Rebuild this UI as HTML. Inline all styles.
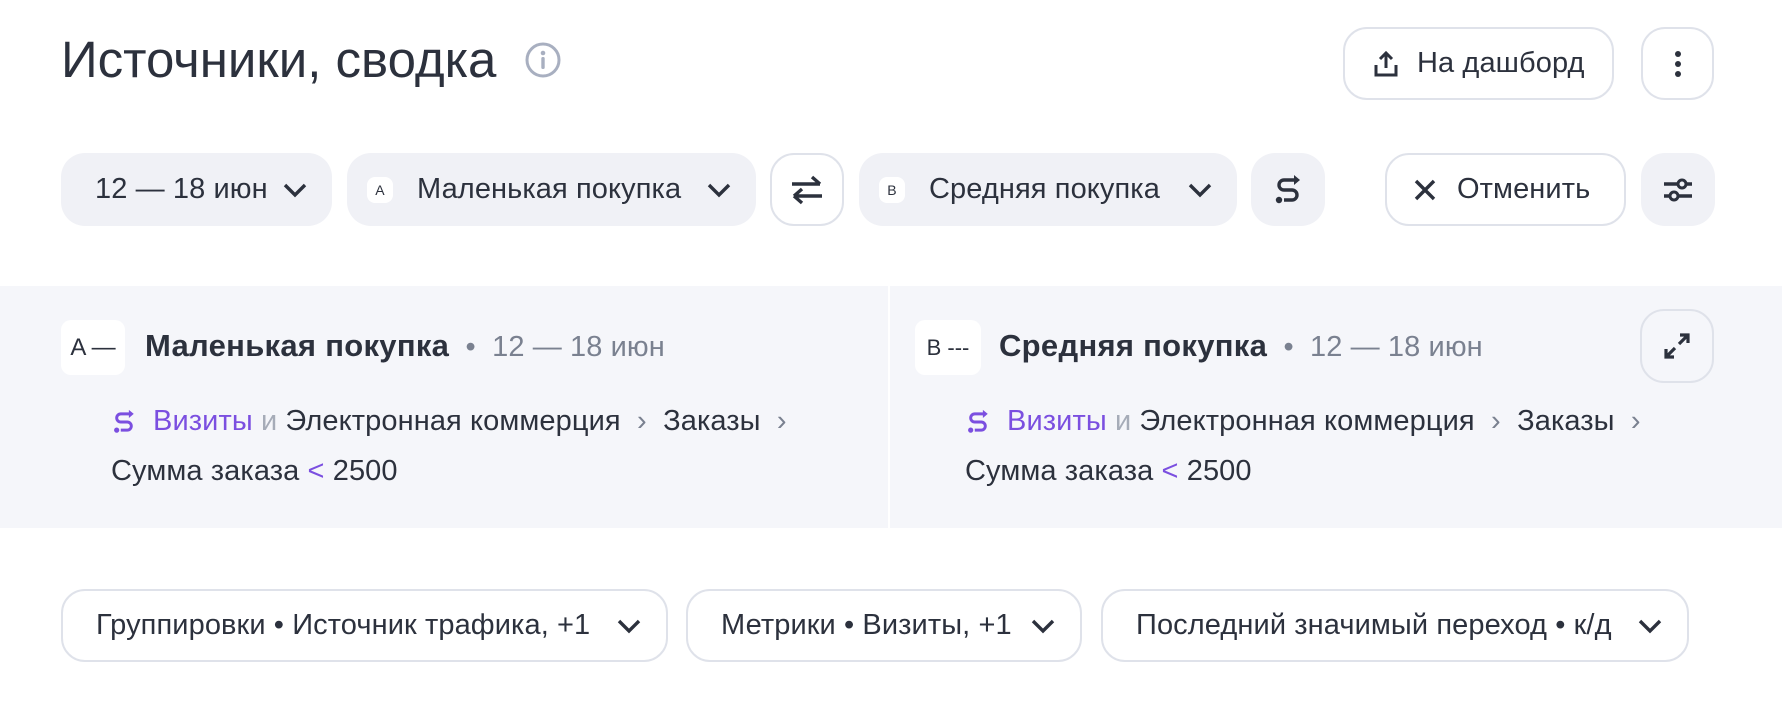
<!DOCTYPE html>
<html><head><meta charset="utf-8"><style>
*{margin:0;padding:0;box-sizing:border-box}
body{width:1782px;height:706px;background:#fff;font-family:"Liberation Sans","DejaVu Sans",sans-serif;color:#2c313d;position:relative;overflow:hidden}
.a{position:absolute}
.chip{position:absolute;height:73px;border-radius:24px;background:#f0f1f6;display:flex;align-items:center;font-size:29px;letter-spacing:0.1px;white-space:nowrap}
.sb{justify-content:space-between;padding-right:24px}
.sb>span.t{flex:1}
.wb{background:#fff;border:2px solid #dfe2ea}
.badge{display:inline-flex;width:26px;height:26px;border-radius:8px;background:#fff;font-size:14px;align-items:center;justify-content:center;margin-right:24px}
.panel{position:absolute;top:286px;height:242px;background:#f5f6fa}
.pt{position:absolute;font-size:29px;white-space:nowrap;letter-spacing:0.1px}
.bg{font-weight:bold;font-size:31px;letter-spacing:0.3px}
.gr{color:#7a8190}
.pu{color:#7b4fe0}
</style></head><body>
<div class="a" style="left:61px;top:30px;font-size:51px;letter-spacing:0px;white-space:nowrap">Источники, сводка</div>
<svg class="a" style="left:525px;top:42px" width="36" height="36" viewBox="0 0 36 36"><circle cx="18" cy="18" r="16" fill="none" stroke="#a8afc0" stroke-width="3"/><circle cx="18" cy="11" r="2.3" fill="#a8afc0"/><rect x="16.3" y="15" width="3.4" height="12" rx="1.5" fill="#a8afc0"/></svg>

<div class="chip wb" style="left:1343px;top:27px;width:271px;padding-left:26px"><svg width="30" height="30" viewBox="0 0 30 30" style="margin-right:16px"><path d="M15 4v15M9 10l6-6 6 6M5 16v10h20V16" fill="none" stroke="#2c313d" stroke-width="3"/></svg>На дашборд</div>
<div class="chip wb" style="left:1641px;top:27px;width:73px;justify-content:center"><svg width="8" height="30"><circle cx="4" cy="5" r="3" fill="#2c313d"/><circle cx="4" cy="15" r="3" fill="#2c313d"/><circle cx="4" cy="25" r="3" fill="#2c313d"/></svg></div>

<div class="chip sb" style="left:61px;top:153px;width:271px;padding-left:34px"><span class="t">12 — 18 июн</span><svg width="26" height="16" viewBox="0 0 26 16"><path d="M3 3l10 10 10-10" fill="none" stroke="#2c313d" stroke-width="3.4"/></svg></div>
<div class="chip sb" style="left:347px;top:153px;width:409px;padding-left:20px"><span class="badge">A</span><span class="t">Маленькая покупка</span><svg width="26" height="16" viewBox="0 0 26 16"><path d="M3 3l10 10 10-10" fill="none" stroke="#2c313d" stroke-width="3.4"/></svg></div>
<div class="chip wb" style="left:770px;top:153px;width:74px;justify-content:center"><svg width="34" height="30" viewBox="0 0 34 30"><path d="M2 9h28M22 2l8 7M32 21H4M12 14l-8 7M4 21l8 7" fill="none" stroke="#2c313d" stroke-width="3.4"/></svg></div>
<div class="chip sb" style="left:859px;top:153px;width:378px;padding-left:20px"><span class="badge">B</span><span class="t">Средняя покупка</span><svg width="26" height="16" viewBox="0 0 26 16"><path d="M3 3l10 10 10-10" fill="none" stroke="#2c313d" stroke-width="3.4"/></svg></div>
<div class="chip" style="left:1251px;top:153px;width:74px;justify-content:center"><svg width="30" height="32" viewBox="0 0 30 32"><path d="M24 6H11a5 5 0 0 0 0 10h8a5 5 0 0 1 0 10H11" fill="none" stroke="#2c313d" stroke-width="3.4"/><path d="M21 1l6 5-6 5z" fill="#2c313d"/><circle cx="6" cy="26" r="3.2" fill="#2c313d"/></svg></div>
<div class="chip wb" style="left:1385px;top:153px;width:241px;padding-left:26px"><svg width="24" height="24" viewBox="0 0 24 24" style="margin-right:20px"><path d="M3 3l18 18M21 3L3 21" stroke="#2c313d" stroke-width="3.4"/></svg>Отменить</div>
<div class="chip" style="left:1641px;top:153px;width:74px;justify-content:center"><svg width="32" height="32" viewBox="0 0 32 32"><path d="M2 10h14M24 10h6M2 22h6M16 22h14" stroke="#2c313d" stroke-width="3.4"/><circle cx="20" cy="10" r="4" fill="none" stroke="#2c313d" stroke-width="3"/><circle cx="12" cy="22" r="4" fill="none" stroke="#2c313d" stroke-width="3"/></svg></div>

<div class="panel" style="left:0;width:888px"></div>
<div class="panel" style="left:890px;width:892px"></div>

<div class="a" style="left:61px;top:320px;width:64px;height:55px;background:#fff;border-radius:10px;font-size:24px;display:flex;align-items:center;justify-content:center">A —</div>
<div class="pt" style="left:145px;top:328px"><span class="bg">Маленькая покупка</span> <span class="gr">&nbsp;•&nbsp; 12 — 18 июн</span></div>
<svg class="a" style="left:111px;top:409px" width="26" height="26" viewBox="0 0 30 32"><path d="M24 6H11a5 5 0 0 0 0 10h8a5 5 0 0 1 0 10H11" fill="none" stroke="#7b4fe0" stroke-width="3.6"/><path d="M21 1l6 5-6 5z" fill="#7b4fe0"/><circle cx="6" cy="26" r="3.2" fill="#7b4fe0"/></svg>
<div class="pt" style="left:153px;top:405px"><span class="pu">Визиты</span> <span class="gr" style="color:#a6acb8">и</span> Электронная коммерция <span class="gr">&nbsp;›&nbsp;</span> Заказы <span class="gr">&nbsp;›</span></div>
<div class="pt" style="left:111px;top:455px">Сумма заказа <span class="pu">&lt;</span> 2500</div>

<div class="a" style="left:915px;top:320px;width:66px;height:55px;background:#fff;border-radius:10px;font-size:22px;display:flex;align-items:center;justify-content:center">B ---</div>
<div class="pt" style="left:999px;top:328px"><span class="bg">Средняя покупка</span> <span class="gr">&nbsp;•&nbsp; 12 — 18 июн</span></div>
<svg class="a" style="left:965px;top:409px" width="26" height="26" viewBox="0 0 30 32"><path d="M24 6H11a5 5 0 0 0 0 10h8a5 5 0 0 1 0 10H11" fill="none" stroke="#7b4fe0" stroke-width="3.6"/><path d="M21 1l6 5-6 5z" fill="#7b4fe0"/><circle cx="6" cy="26" r="3.2" fill="#7b4fe0"/></svg>
<div class="pt" style="left:1007px;top:405px"><span class="pu">Визиты</span> <span class="gr" style="color:#a6acb8">и</span> Электронная коммерция <span class="gr">&nbsp;›&nbsp;</span> Заказы <span class="gr">&nbsp;›</span></div>
<div class="pt" style="left:965px;top:455px">Сумма заказа <span class="pu">&lt;</span> 2500</div>
<div class="chip wb" style="left:1640px;top:309px;width:74px;height:74px;background:#f5f6fa;justify-content:center"><svg width="28" height="28" viewBox="0 0 28 28"><path d="M16 12l9-9M17 3h8v8M12 16l-9 9M3 17v8h8" fill="none" stroke="#2c313d" stroke-width="3.2"/></svg></div>

<div class="chip wb sb" style="left:61px;top:589px;width:607px;padding-left:33px"><span class="t">Группировки • Источник трафика, +1</span><svg width="26" height="16" viewBox="0 0 26 16"><path d="M3 3l10 10 10-10" fill="none" stroke="#2c313d" stroke-width="3.4"/></svg></div>
<div class="chip wb sb" style="left:686px;top:589px;width:396px;padding-left:33px"><span class="t">Метрики • Визиты, +1</span><svg width="26" height="16" viewBox="0 0 26 16"><path d="M3 3l10 10 10-10" fill="none" stroke="#2c313d" stroke-width="3.4"/></svg></div>
<div class="chip wb sb" style="left:1101px;top:589px;width:588px;padding-left:33px"><span class="t">Последний значимый переход • к/д</span><svg width="26" height="16" viewBox="0 0 26 16"><path d="M3 3l10 10 10-10" fill="none" stroke="#2c313d" stroke-width="3.4"/></svg></div>
</body></html>
